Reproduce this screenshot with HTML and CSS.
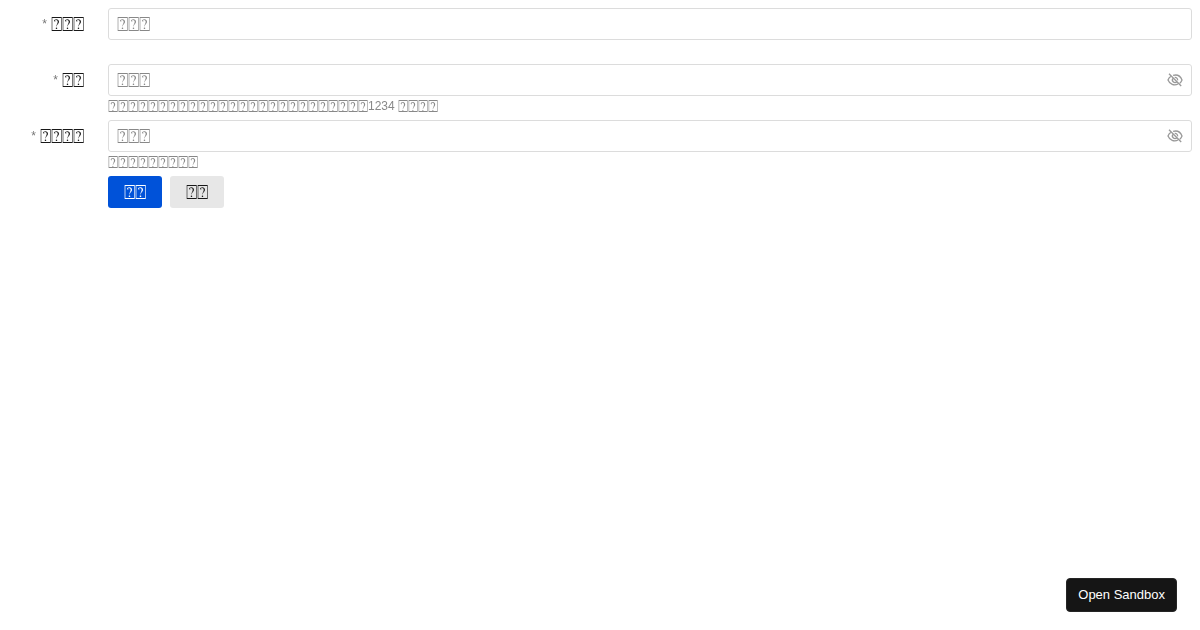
FILE: index.html
```html
<!DOCTYPE html>
<html lang="zh">
<head>
<meta charset="utf-8">
<meta name="viewport" content="width=device-width, initial-scale=1">
<title>Form</title>
<link rel="stylesheet" href="styles.css">
</head>
<body>
<form class="form">
  <div class="form-item">
    <label class="form-label" for="account"><span class="required">*</span><span class="glyphs">⍰⍰⍰</span></label>
    <div class="form-controls">
      <div class="field"><input class="field-input" id="account" type="text" placeholder="⍰⍰⍰"></div>
    </div>
  </div>
  <div class="form-item">
    <label class="form-label" for="password"><span class="required">*</span><span class="glyphs">⍰⍰</span></label>
    <div class="form-controls">
      <div class="field">
        <input class="field-input" id="password" type="password" placeholder="⍰⍰⍰">
        <button class="field-toggle" type="button" aria-label="Show password">
          <svg class="icon" viewBox="0 0 16 16" fill="none" stroke="currentColor" stroke-width="1.3"><path d="M2 1.700 14.200 14M6.100 3.400C10.100 2.300 13.500 4.200 15 8c-.5 1.300-1.200 2.400-2.200 3.200M3.700 4.500C2.500 5.300 1.600 6.500 1 8c1.700 4.300 6.200 6 10 4M6.200 6.100a2.600 2.600 0 0 0 3.700 3.700M7.700 5.400A2.600 2.600 0 0 1 10.600 8.300"/></svg>
        </button>
      </div>
      <p class="help"><span class="glyphs">⍰⍰⍰⍰⍰⍰⍰⍰⍰⍰⍰⍰⍰⍰⍰⍰⍰⍰⍰⍰⍰⍰⍰⍰⍰⍰</span><span>1234 </span><span class="glyphs">⍰⍰⍰⍰</span></p>
    </div>
  </div>
  <div class="form-item">
    <label class="form-label" for="confirm"><span class="required">*</span><span class="glyphs">⍰⍰⍰⍰</span></label>
    <div class="form-controls">
      <div class="field">
        <input class="field-input" id="confirm" type="password" placeholder="⍰⍰⍰">
        <button class="field-toggle" type="button" aria-label="Show password">
          <svg class="icon" viewBox="0 0 16 16" fill="none" stroke="currentColor" stroke-width="1.3"><path d="M2 1.700 14.200 14M6.100 3.400C10.100 2.300 13.500 4.200 15 8c-.5 1.300-1.200 2.400-2.200 3.200M3.700 4.500C2.500 5.300 1.600 6.500 1 8c1.700 4.300 6.200 6 10 4M6.200 6.100a2.600 2.600 0 0 0 3.700 3.700M7.700 5.400A2.600 2.600 0 0 1 10.600 8.300"/></svg>
        </button>
      </div>
      <p class="help"><span class="glyphs">⍰⍰⍰⍰⍰⍰⍰⍰⍰</span></p>
    </div>
  </div>
  <div class="form-actions">
    <button class="button button-primary" type="submit">⍰⍰</button>
    <button class="button" type="reset">⍰⍰</button>
  </div>
</form>
<button class="sandbox-button" type="button">Open Sandbox</button>
</body>
</html>
```
FILE: styles.css
```css
* { box-sizing: border-box; }

body {
  margin: 8px;
  background: #fff;
  color: #181818;
  font: 14px/22px "Liberation Sans", Arial, sans-serif;
}

.form { will-change: transform; }

.form-item {
  display: flex;
  min-height: 56px;
}

.form-label {
  display: flex;
  flex: none;
  align-items: center;
  justify-content: flex-end;
  gap: 4px;
  width: 100px;
  height: 32px;
  padding-right: 24px;
}

.glyphs {
  font-family: Lato, sans-serif;
  font-size: 19px;
  font-weight: 300;
  line-height: 20px;
}

.required {
  color: #777;
  font-size: 12px;
}

.form-controls {
  flex: 1;
  min-width: 0;
}

.field {
  display: flex;
  align-items: center;
  height: 32px;
  padding: 0 8px;
  border: 1px solid #dcdcdc;
  border-radius: 3px;
}

.field-input {
  flex: 1;
  min-width: 0;
  height: 30px;
  padding: 0;
  border: 0;
  outline: 0;
  background: transparent;
  color: inherit;
  font: 300 19px/30px Lato, sans-serif;
}

.field-input::placeholder {
  color: #888;
  opacity: 1;
}

.field-toggle {
  width: 16px;
  height: 16px;
  padding: 0;
  border: 0;
  background: none;
  color: #999;
}

.icon {
  display: block;
  width: 16px;
  height: 16px;
}

.help {
  display: flex;
  align-items: center;
  height: 20px;
  margin: 0;
  color: #888;
  font-size: 12px;
  line-height: 20px;
  white-space: pre;
}

.help .glyphs { font-size: 17px; }

.form-actions {
  display: flex;
  gap: 8px;
  padding-left: 100px;
}

.button {
  height: 32px;
  padding: 0 16px;
  border: 0;
  border-radius: 3px;
  background: #e7e7e7;
  color: #181818;
  font: 300 19px/32px Lato, sans-serif;
}

.button-primary {
  background: #0052d9;
  color: #fff;
}

.sandbox-button {
  position: fixed;
  right: 23px;
  bottom: 18px;
  height: 34px;
  padding: 0 11px;
  border: 1px solid #252525;
  border-radius: 4px;
  background: #151515;
  color: #fff;
  font: 13px/16px "Liberation Sans", Arial, sans-serif;
}
```
